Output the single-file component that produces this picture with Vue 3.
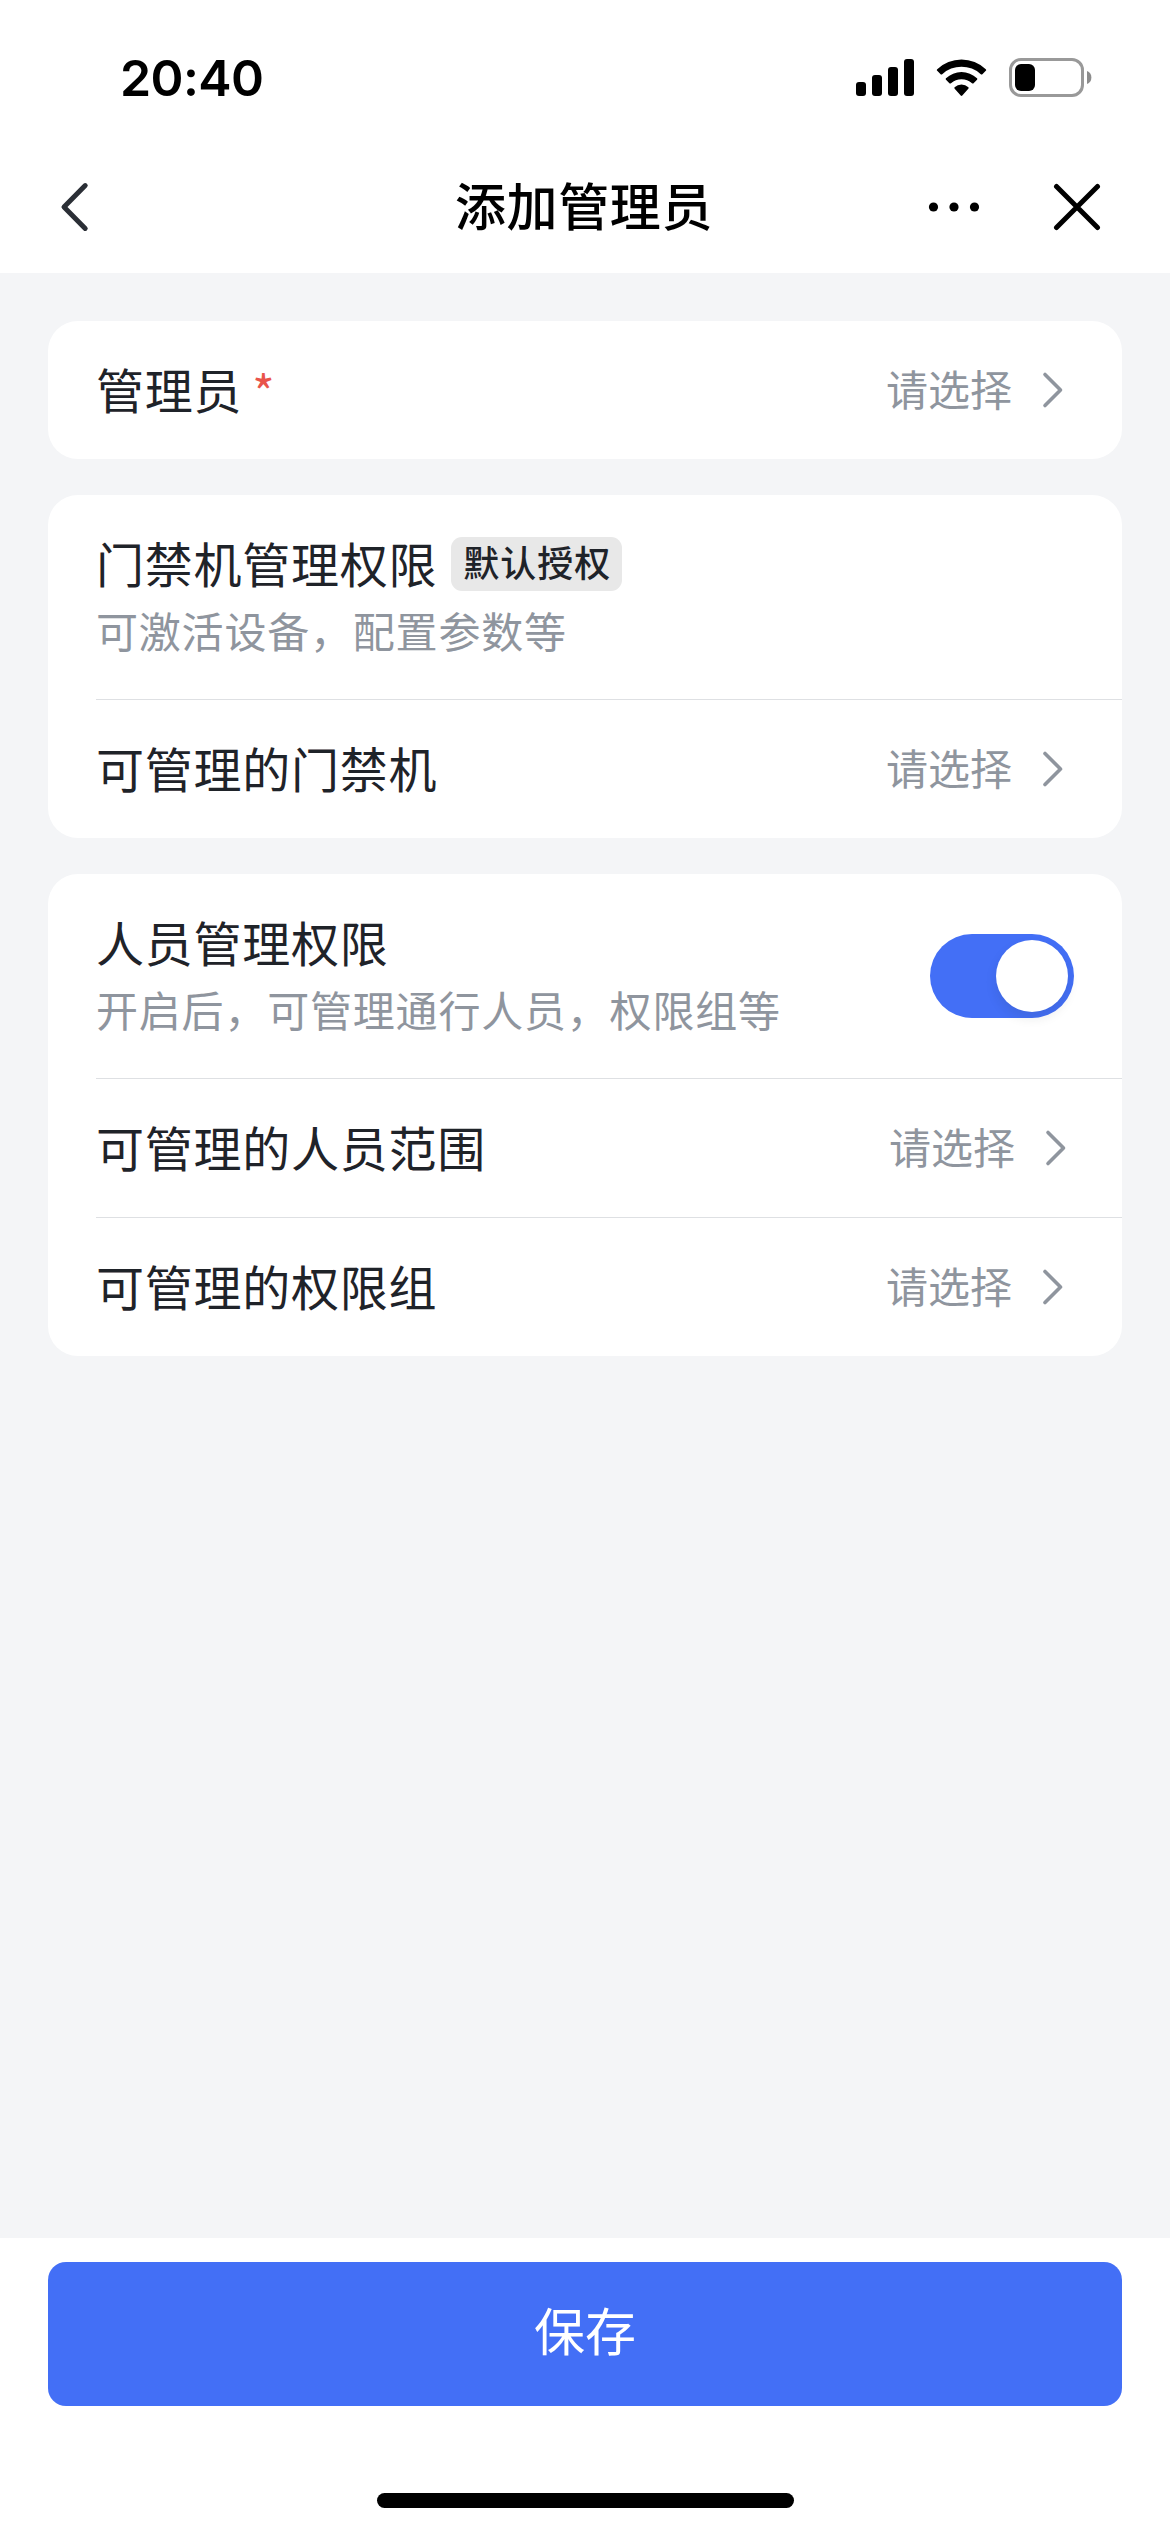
<template>
  <div class="page">
    <header class="header">
      <div class="status-bar">
        <span class="time">20:40</span>
        <div class="status-icons">
          <svg class="signal" width="58" height="37" viewBox="0 0 58 37">
            <rect x="0" y="23" width="10" height="14" rx="3" />
            <rect x="16" y="16" width="10" height="21" rx="3" />
            <rect x="32" y="8" width="10" height="29" rx="3" />
            <rect x="48" y="0" width="10" height="37" rx="3" />
          </svg>
          <svg class="wifi" width="52" height="38" viewBox="0 0 52 38">
            <path d="M1.2 10.2Q0.4 11 1.2 11.8L4.6 15.2Q5.4 16 6.2 15.2A28.5 28.5 0 0 1 44.8 15.2Q45.6 16 46.4 15.2L49.8 11.8Q50.6 11 49.8 10.2A35.2 35.2 0 0 0 1.2 10.2Z" />
            <path d="M10 19.2Q9.2 20 10 20.8L13.4 24.2Q14.2 25 15 24.2A16 16 0 0 1 36 24.2Q36.8 25 37.6 24.2L41 20.8Q41.8 20 41 19.2A22.6 22.6 0 0 0 10 19.2Z" />
            <path d="M18.6 28.2Q17.9 29 18.7 29.8L24.7 36.6Q25.5 37.4 26.3 36.6L32.3 29.8Q33.1 29 32.4 28.2A10.5 10.5 0 0 0 18.6 28.2Z" />
          </svg>
          <svg class="battery" width="83" height="39" viewBox="0 0 83 39">
            <rect x="1.5" y="1.5" width="72" height="36" rx="10.5" fill="none" stroke="#999" stroke-width="3" />
            <rect x="6" y="6" width="20" height="27" rx="6" />
            <path d="M78 13A7 7 0 0 1 78 26Z" fill="#8c8c8c" />
          </svg>
        </div>
      </div>
      <div class="nav-bar">
        <div class="nav-side nav-back">
          <svg width="30" height="52" viewBox="0 0 30 52">
            <path d="M26.2 4.6L5 26L26.2 47.4" fill="none" stroke="#2b2f36" stroke-width="5" stroke-linecap="round" stroke-linejoin="round" />
          </svg>
        </div>
        <h1 class="nav-title">添加管理员</h1>
        <div class="nav-side nav-actions">
          <svg width="52" height="12" viewBox="0 0 52 12">
            <circle cx="5.5" cy="6" r="4.6" />
            <circle cx="26" cy="6" r="4.6" />
            <circle cx="46.5" cy="6" r="4.6" />
          </svg>
          <svg width="48" height="48" viewBox="0 0 48 48">
            <path d="M3.5 3.5L44.5 44.5M44.5 3.5L3.5 44.5" fill="none" stroke="#000" stroke-width="5" stroke-linecap="round" />
          </svg>
        </div>
      </div>
    </header>

    <main class="content">
      <section v-for="(group, i) in groups" :key="i" class="card">
        <div
          v-for="row in group"
          :key="row.label"
          class="row"
          :class="{ tall: row.desc }"
        >
          <div class="row-main">
            <div class="label">
              <span class="label-text">{{ row.label }}</span>
              <span v-if="row.required" class="required">*</span>
              <span v-if="row.tag" class="tag">{{ row.tag }}</span>
            </div>
            <div v-if="row.desc" class="desc">{{ row.desc }}</div>
          </div>
          <div v-if="row.select" class="select" :class="{ shifted: row.shifted }">
            <span class="select-text">请选择</span>
            <svg width="22" height="38" viewBox="0 0 22 38">
              <path d="M3 3.5L18.5 19L3 34.5" fill="none" stroke="#8f959e" stroke-width="3.6" stroke-linecap="round" stroke-linejoin="round" />
            </svg>
          </div>
          <div
            v-if="row.toggle"
            class="switch"
            :class="{ on: enabled }"
            @click="enabled = !enabled"
          >
            <div class="thumb"></div>
          </div>
        </div>
      </section>
    </main>

    <footer class="footer">
      <button class="save">保存</button>
      <div class="home-indicator"></div>
    </footer>
  </div>
</template>

<script setup>
import { ref } from "vue";

const enabled = ref(true);

const groups = [
  [{ label: "管理员", required: true, select: true }],
  [
    { label: "门禁机管理权限", tag: "默认授权", desc: "可激活设备，配置参数等" },
    { label: "可管理的门禁机", select: true },
  ],
  [
    { label: "人员管理权限", desc: "开启后，可管理通行人员，权限组等", toggle: true },
    { label: "可管理的人员范围", select: true, shifted: true },
    { label: "可管理的权限组", select: true },
  ],
];
</script>

<style>
body {
  margin: 0;
  background: #f4f5f7;
}
</style>

<style scoped>
.page {
  display: flex;
  flex-direction: column;
  width: 1170px;
  height: 2532px;
  background: #f4f5f7;
  font-family: "Noto Sans CJK SC", sans-serif;
  color: #1f2329;
}

.header {
  height: 273px;
  background: #fff;
}

.status-bar {
  display: flex;
  align-items: center;
  justify-content: space-between;
  height: 155px;
  padding: 0 78px 0 120px;
  box-sizing: border-box;
}

.time {
  font-family: Inter, sans-serif;
  font-size: 50px;
  font-weight: 600;
  letter-spacing: -0.6px;
  color: #000;
}

.status-icons {
  display: flex;
  align-items: center;
}

.wifi {
  margin-left: 22px;
}

.battery {
  margin-left: 21px;
}

.nav-bar {
  display: flex;
  align-items: center;
  justify-content: space-between;
  height: 104px;
  padding: 0 69px 0 59px;
}

.nav-side {
  display: flex;
  align-items: center;
  width: 300px;
}

.nav-back {
  width: 308px;
}

.nav-actions {
  justify-content: flex-end;
  gap: 73px;
}

.nav-title {
  margin: 0;
  padding-bottom: 6px;
  font-size: 51px;
  font-weight: 500;
  line-height: 72px;
  letter-spacing: 0.6px;
  color: #000;
}

.content {
  display: flex;
  flex: 1;
  flex-direction: column;
  gap: 36px;
  padding: 48px 48px 0;
}

.card {
  border-radius: 30px;
  background: #fff;
}

.row {
  display: flex;
  align-items: center;
  justify-content: space-between;
  height: 138px;
  margin-left: 48px;
  padding-right: 48px;
}

.row.tall {
  height: 204px;
}

.row.tall .row-main {
  padding-bottom: 6px;
}

.row + .row {
  border-top: 1px solid #dee0e3;
}

.label {
  display: flex;
  align-items: center;
  height: 72px;
  font-size: 48px;
  letter-spacing: 0.75px;
  white-space: nowrap;
}

.label-text {
  padding-bottom: 4px;
}

.required {
  margin-left: 10px;
  color: #e9544b;
}

.tag {
  height: 54px;
  margin-left: 14px;
  padding: 0 11px 0 12px;
  border-radius: 11px;
  background: #e8e8e8;
  font-size: 36px;
  font-weight: 500;
  line-height: 48px;
  letter-spacing: 1px;
}

.desc {
  height: 60px;
  font-size: 42px;
  line-height: 60px;
  letter-spacing: 0.8px;
  white-space: nowrap;
  color: #8f959e;
}

.select {
  display: flex;
  align-items: center;
  gap: 30px;
  padding-right: 10px;
  font-size: 42px;
  line-height: 60px;
  color: #8f959e;
}

.select.shifted {
  padding-right: 7px;
}

.select-text {
  padding-bottom: 5px;
}

.switch {
  width: 144px;
  height: 84px;
  padding: 6px;
  border-radius: 42px;
  background: #bbbfc4;
  box-sizing: border-box;
}

.switch.on {
  background: #436ff6;
}

.thumb {
  width: 72px;
  height: 72px;
  border-radius: 50%;
  background: #fff;
  box-shadow: 0 6px 12px rgba(31, 35, 41, 0.1);
}

.switch.on .thumb {
  margin-left: auto;
}

.footer {
  display: flex;
  flex-direction: column;
  align-items: center;
  justify-content: space-between;
  height: 294px;
  padding: 24px 48px;
  background: #fff;
  box-sizing: border-box;
}

.save {
  width: 100%;
  height: 144px;
  padding: 0 0 10px;
  border: none;
  border-radius: 18px;
  background: #436ff6;
  font-family: inherit;
  font-size: 51px;
  color: #fff;
}

.home-indicator {
  width: 417px;
  height: 15px;
  border-radius: 8px;
  background: #000;
}
</style>
